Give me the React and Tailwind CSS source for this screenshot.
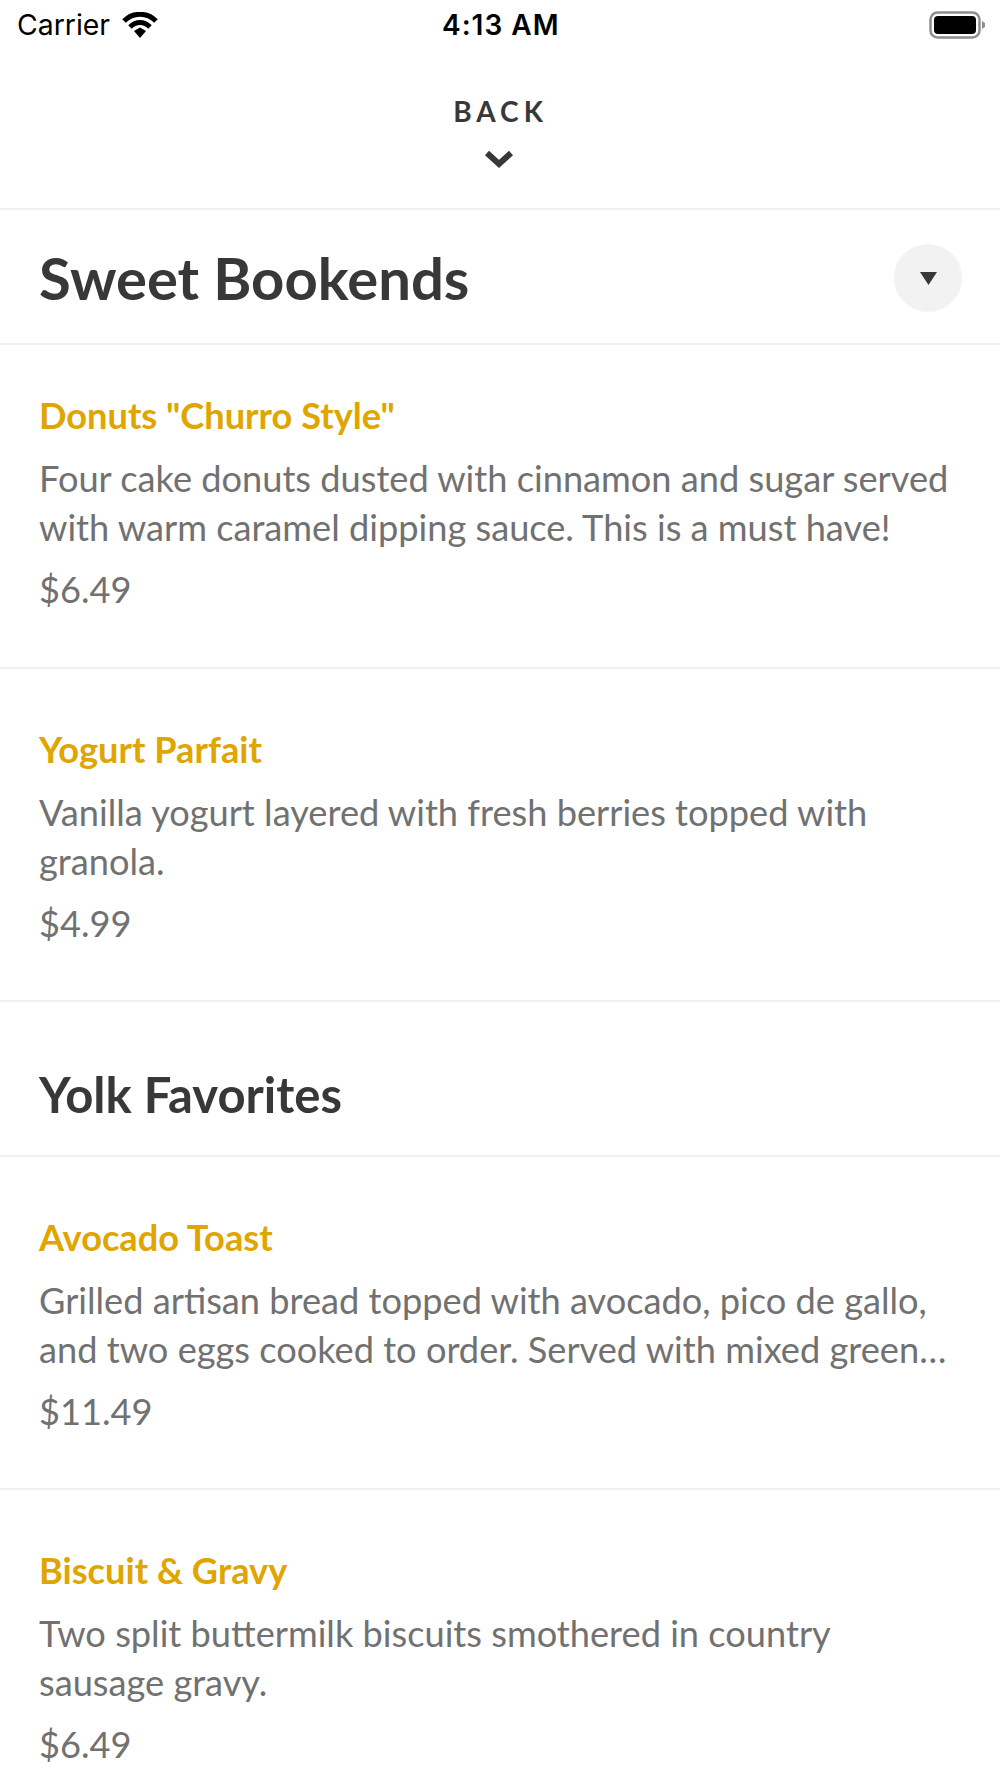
const items1 = [
  { t: 'Donuts "Churro Style"', d: ["Four cake donuts dusted with cinnamon and sugar served", "with warm caramel dipping sauce. This is a must have!"], p: "$6.49", cls: "h-[324px] pt-[49px] border-b-2" },
  { t: "Yogurt Parfait", d: ["Vanilla yogurt layered with fresh berries topped with", "granola."], p: "$4.99", cls: "h-[333px] pt-[59px] border-b-2" },
];
const items2 = [
  { t: "Avocado Toast", d: ["Grilled artisan bread topped with avocado, pico de gallo,", "and two eggs cooked to order. Served with mixed green…"], p: "$11.49", cls: "h-[333px] pt-[59px] border-b-2" },
  { t: "Biscuit & Gravy", d: ["Two split buttermilk biscuits smothered in country", "sausage gravy."], p: "$6.49", cls: "pt-[59px]" },
];
function Item({ it }) {
  return (
    <div className={"pl-[39px] pr-[40px] border-[#f0f0f0] " + it.cls}>
      <div className="text-[36.2px] leading-[42px] font-bold text-[#e0a500] whitespace-nowrap">{it.t}</div>
      <div className="mt-[18px] text-[36.2px] leading-[49px] text-[#717171] whitespace-nowrap">
        {it.d.map((l) => <div key={l}>{l}</div>)}
      </div>
      <div className="mt-[14px] text-[36.2px] leading-[46px] text-[#717171]">{it.p}</div>
    </div>
  );
}
export default function App() {
  return (
    <div className="w-[1000px] h-[1778px] overflow-hidden bg-white font-['Lato',sans-serif]">
      <div className="h-[50px] flex items-center justify-between pl-[17px] pr-[15px] relative font-['Inter',sans-serif] text-black">
        <div className="flex items-center gap-[12px]">
          <span className="text-[28.4px] leading-none">Carrier</span>
          <svg width="36" height="26" viewBox="0 0 36 26"><path d="M2 9 C11 0 25 0 34 9" fill="none" stroke="#000" strokeWidth="5" /><path d="M8 15 C14 9 22 9 28 15" fill="none" stroke="#000" strokeWidth="5" /><path d="M12 19 L18 15.5 L24 19 L18 26 Z" fill="#000" /></svg>
        </div>
        <span className="absolute left-[442px] text-[28px] leading-none font-semibold tracking-[1px]">4:13 AM</span>
        <svg width="56" height="28" viewBox="0 0 56 28"><rect x="1.5" y="1.5" width="49" height="25" rx="7" fill="#fff" stroke="#8e8e8e" strokeWidth="2.5" /><rect x="5" y="5" width="42" height="18" rx="4" fill="#000" /><path d="M53 10 L56 12 V16 L53 18 Z" fill="#8e8e8e" /></svg>
      </div>
      <div className="h-[160px] border-b-2 border-[#f0f0f0] flex flex-col items-center pt-[44px]">
        <div className="text-[28px] leading-[34px] font-bold tracking-[5px] pl-[1px] text-[#383838]">BACK</div>
        <svg className="mt-[22px] -ml-[3px]" width="30" height="20" viewBox="0 0 30 20"><path d="M3 3 L15 14 L27 3" fill="none" stroke="#383838" strokeWidth="6" /></svg>
      </div>
      <div className="h-[135px] border-b-2 border-[#f0f0f0] flex items-center justify-between pl-[39px] pr-[38px]">
        <div className="text-[58px] leading-none font-bold text-[#383838] pt-[2px]">Sweet Bookends</div>
        <div className="w-[68px] h-[68px] rounded-full bg-[#f2f2f2] flex items-center justify-center mt-[2px]">
          <svg className="mt-[1px]" width="17" height="13" viewBox="0 0 17 13"><path d="M0 0 H17 L8.5 13 Z" fill="#383838" /></svg>
        </div>
      </div>
      {items1.map((it) => <Item key={it.t} it={it} />)}
      <div className="h-[155px] border-b-2 border-[#f0f0f0] flex items-center pl-[39px] pt-[32px]">
        <div className="text-[49px] leading-none font-bold text-[#383838]">Yolk Favorites</div>
      </div>
      <Item it={items2[0]} />
      <Item it={items2[1]} />
    </div>
  );
}
